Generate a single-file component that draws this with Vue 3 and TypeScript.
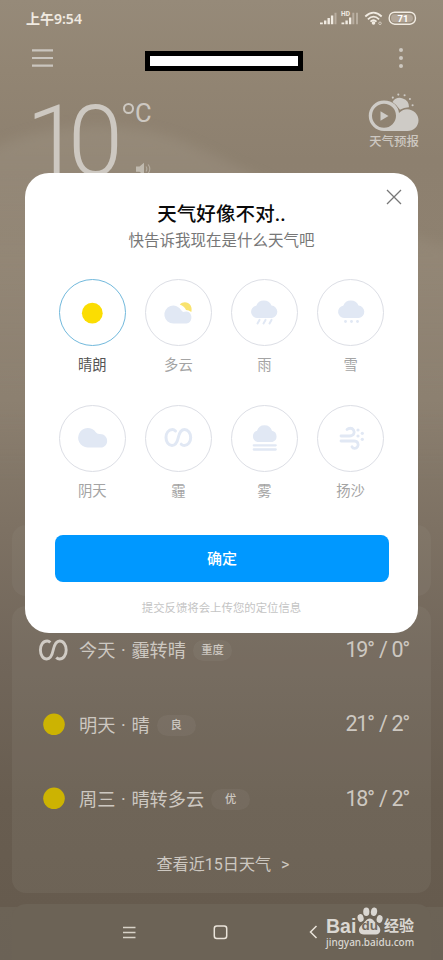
<script setup lang="ts">
import { ref } from 'vue'

type Kind = 'sun' | 'partly' | 'rain' | 'snow' | 'cloud' | 'haze' | 'fog' | 'sand'

interface WeatherOption {
  kind: Kind
  label: string
}

interface ForecastDay {
  day: string
  condition: string
  quality: string
  high: number
  low: number
  haze: boolean
}

const options: WeatherOption[] = [
  { kind: 'sun', label: '晴朗' },
  { kind: 'partly', label: '多云' },
  { kind: 'rain', label: '雨' },
  { kind: 'snow', label: '雪' },
  { kind: 'cloud', label: '阴天' },
  { kind: 'haze', label: '霾' },
  { kind: 'fog', label: '雾' },
  { kind: 'sand', label: '扬沙' },
]

const forecast: ForecastDay[] = [
  { day: '今天', condition: '霾转晴', quality: '重度', high: 19, low: 0, haze: true },
  { day: '明天', condition: '晴', quality: '良', high: 21, low: 2, haze: false },
  { day: '周三', condition: '晴转多云', quality: '优', high: 18, low: 2, haze: false },
]

const selected = ref<Kind>('sun')
</script>

<template>
  <div class="phone">
    <svg class="hills" viewBox="0 0 443 560" aria-hidden="true">
      <defs>
        <filter id="soft" x="-20%" y="-20%" width="140%" height="140%">
          <feGaussianBlur stdDeviation="6" />
        </filter>
        <linearGradient id="fade" x1="0" y1="0" x2="0" y2="1">
          <stop offset="0" stop-color="#9d9282" />
          <stop offset="1" stop-color="#9d9282" stop-opacity="0" />
        </linearGradient>
      </defs>
      <path d="M-20 155C40 120 130 118 185 142C240 165 290 200 460 250V480H-20Z" fill="url(#fade)" opacity=".5" filter="url(#soft)" />
    </svg>

    <header class="status">
      <span class="clock">上午9:54</span>
      <svg class="status-icons" viewBox="0 0 100 20" width="100" height="20">
        <g fill="#f1ebe2">
          <path d="M1 14.500h2.800v1.800H1zM5 12.500h2.400v3.800H5zM8.500 10h2.400v6.300H8.500zM11.900 7.500h2.400v8.800h-2.400z" />
          <path d="M15.500 4.800h2v11.500h-2zM33.300 4.800h2v11.500h-2zM37 4.800h2v11.500h-2z" opacity=".38" />
          <path d="M22.500 14.500h2.800v1.800h-2.800zM26.400 12.500h2.400v3.800h-2.400zM30 9.500h2.300v6.800H30z" />
          <circle cx="54.500" cy="15" r="1.800" />
        </g>
        <g fill="none" stroke="#f1ebe2" stroke-width="1.800">
          <path d="M46.300 8.500Q54.500 .8 62.700 8.500M48.900 11.300Q54.500 6 60.100 11.300M51.500 13.700Q54.500 10.800 57.500 13.700" />
          <circle cx="61" cy="15.300" r="1.300" stroke-width="1" opacity=".6" />
          <rect x="70.200" y="4.200" width="26.200" height="12" rx="5.500" stroke-width="1.400" />
        </g>
        <path d="M75 6.200h14q5 0 5 4t-5 4H75q-3 0-3-4t3-4Z" fill="#d6cdc0" opacity=".45" />
        <text x="22" y="8" class="hd">HD</text>
        <text x="78.500" y="13.600" class="battery">71</text>
      </svg>
    </header>

    <div class="toolbar">
      <svg viewBox="0 0 21 18" width="21" height="18">
        <path d="M0 1.300h21M0 9h21M0 16.700h21" stroke="#cac5be" stroke-width="2.200" />
      </svg>
      <div class="place"></div>
      <svg viewBox="0 0 6 20" width="6" height="20" fill="#cdc8c0">
        <circle cx="3" cy="2" r="2" /><circle cx="3" cy="10" r="2" /><circle cx="3" cy="18" r="2" />
      </svg>
    </div>

    <section class="current">
      <span class="temp">10</span>
      <div class="side">
        <span class="unit"><i class="ring"></i>C</span>
        <svg class="speaker" viewBox="0 0 16 14" width="16" height="14">
          <path d="M0 4.500h3.500L8 .8v12.400L3.500 9.800H0Z" fill="#c0baaf" />
          <path d="M10 4.500q1.700 2.500 0 5M12.200 2.500q3.200 4.500 0 9" fill="none" stroke="#b5ada1" stroke-width="1.100" />
        </svg>
      </div>
      <div class="video">
        <svg viewBox="0 0 52 40" width="52" height="40">
          <g fill="#cecbc6">
            <path d="M24.500 9A9 9 0 0 1 41 14.300A16 16 0 0 0 32 16.800Q29 12 24.500 9Z" />
            <circle cx="24.800" cy="4.600" r="1.050" /><circle cx="30.300" cy="1.600" r="1.050" /><circle cx="36.600" cy="2.200" r="1.050" />
            <circle cx="41.900" cy="6" r="1.050" /><circle cx="44.600" cy="12.200" r="1.050" />
            <path fill-rule="evenodd" d="M16 7.500C25 7.500 30.500 13.500 31 20Q34.500 16.200 39 16.200C45.500 16.200 50.500 21.200 50.500 27.200C50.500 33.500 45.500 38 39.500 38H16A15.200 15.200 0 0 1 16 7.500ZM16 10.800A12 12 0 1 0 16 34.800A12 12 0 1 0 16 10.800Z" />
            <path d="M12.500 18.200L20.500 23L12.500 27.800Z" />
          </g>
        </svg>
        <span>天气预报</span>
      </div>
    </section>

    <section class="card summary"></section>

    <section class="card forecast">
      <div v-for="row in forecast" :key="row.day" class="day">
        <svg class="day-icon" viewBox="0 0 30 24" width="30" height="24">
          <path v-if="row.haze" d="M12.300 4.600C11.300 3.500 10.200 3 9.200 3C5 3 2.400 7 2.400 12C2.400 17 5 21 8.700 21C12.800 21 14.200 17 15.200 12C16.300 7 17.800 3 21.700 3C25.400 3 28.200 7 28.200 12C28.200 17 25.400 21 21.500 21C20.200 21 19.100 20.400 18.300 19.500" fill="none" stroke="#d0cbc4" stroke-width="2.900" />
          <circle v-else cx="16" cy="11.300" r="10.800" fill="#ccb302" />
        </svg>
        <span class="date">{{ row.day }}</span>
        <span class="dot">·</span>
        <span class="cond">{{ row.condition }}</span>
        <span class="badge">{{ row.quality }}</span>
        <span class="range">{{ row.high }}° / {{ row.low }}°</span>
      </div>
      <div class="more"><span>查看近15日天气</span><span class="arrow">&gt;</span></div>
    </section>

    <section class="next">
      <svg class="keys" viewBox="0 0 210 20" width="210" height="20">
        <path d="M4 4.500h12.500M4 9.500h12.500M4 14.500h12.500" stroke="#d8d2c8" stroke-width="1.700" />
        <rect x="95.300" y="3" width="12.400" height="12.400" rx="2.500" fill="none" stroke="#eae4da" stroke-width="1.500" />
        <path d="M197.500 3L191.500 9L197.500 15" fill="none" stroke="#eae4da" stroke-width="1.500" />
      </svg>
    </section>

    <div class="watermark">
      <div class="brand">
        <span class="bai">Bai</span>
        <span class="paw">
          <svg viewBox="0 0 26 28" width="26" height="28">
            <g fill="#dad7d2">
              <ellipse cx="3.600" cy="11" rx="3" ry="4" transform="rotate(-15 3.600 11)" />
              <ellipse cx="9.300" cy="4.700" rx="3.100" ry="4.300" />
              <ellipse cx="17" cy="4.700" rx="3.100" ry="4.300" transform="rotate(10 17 4.700)" />
              <ellipse cx="22.600" cy="12" rx="2.900" ry="4" transform="rotate(15 22.600 12)" />
              <path d="M12.800 11.500C16.500 11.500 17.500 15.500 21 18.500C25 22 23.500 27.500 19 27.500H7C2 27.500 0 22.500 4.300 18.500C7.800 15.500 9.200 11.500 12.800 11.500Z" />
            </g>
          </svg>
          <span class="du">du</span>
        </span>
        <span class="exp">经验</span>
      </div>
      <div class="site">jingyan.baidu.com</div>
    </div>

    <div class="dialog">
      <button class="close" aria-label="关闭">
        <svg viewBox="0 0 16 16" width="16" height="16">
          <path d="M1 1L15 15M15 1L1 15" stroke="#777" stroke-width="1.300" />
        </svg>
      </button>
      <h1>天气好像不对..</h1>
      <p class="sub">快告诉我现在是什么天气吧</p>

      <div class="grid">
        <div
          v-for="o in options"
          :key="o.kind"
          class="option"
          :class="{ active: o.kind === selected }"
          @click="selected = o.kind"
        >
          <div class="circle">
            <svg viewBox="0 0 40 40" width="40" height="40" fill="#e1e8f4">
              <circle v-if="o.kind === 'sun'" cx="20.300" cy="20.200" r="10.400" fill="#fbdd02" />
              <g v-else-if="o.kind === 'partly'">
                <path d="M21.800 11.500C24 9 27.500 8.500 30 10C33 11.700 34.300 15 33.300 19Q31 17 28 17Q26.500 13 21.800 11.500Z" fill="#f9e36e" />
                <path d="M15.500 30.500A9 9 0 1 1 23.300 17.300Q24.500 19.300 26.500 18.800Q29 18 31 19.300C35 22 34 30.500 28.500 30.500Z" />
              </g>
              <g v-else-if="o.kind === 'rain'">
                <path d="M13 25A6.200 6.200 0 0 1 12.200 12.700A8.300 8.300 0 0 1 27.500 12.500A6.300 6.300 0 0 1 28 25Z" />
                <path d="M15.500 26.900L13.500 30.400M21.500 26.900L19.500 30.400M27.500 26.900L25.500 30.400" stroke="#e1e8f4" stroke-width="2" stroke-linecap="round" />
              </g>
              <g v-else-if="o.kind === 'snow'">
                <path d="M13 25A6.200 6.200 0 0 1 12.200 12.700A8.300 8.300 0 0 1 27.500 12.500A6.300 6.300 0 0 1 28 25Z" />
                <circle cx="14.500" cy="28.500" r="1.400" /><circle cx="20.500" cy="28.500" r="1.400" /><circle cx="26.500" cy="28.500" r="1.400" />
              </g>
              <path v-else-if="o.kind === 'cloud'" d="M15.500 29.500A9.700 9.700 0 1 1 23.800 14.300Q25 16.200 27.500 16.100C37.500 15.800 37.500 29.500 28.500 29.500Z" />
              <path v-else-if="o.kind === 'haze'" d="M17.500 13C16.500 12 15.500 11.500 14.500 11.500C10.500 11.500 8 15 8 19.500C8 24 10.500 27.500 14 27.500C18 27.500 19.300 24 20.300 19.500C21.300 15 22.800 11.500 26.500 11.500C30 11.500 32.700 15 32.700 19.500C32.700 24 30 27.500 26.300 27.500C25 27.500 24 27 23.200 26.200" fill="none" stroke="#e1e8f4" stroke-width="3" stroke-linecap="round" />
              <g v-else-if="o.kind === 'fog'">
                <path d="M13.500 24A5.800 5.800 0 0 1 13 12.800A7.800 7.800 0 0 1 28 12.800A5.800 5.800 0 0 1 28.500 24Z" />
                <path d="M9.800 27.300H31.700M9.800 31.500H31.700" stroke="#e1e8f4" stroke-width="2.300" stroke-linecap="round" />
              </g>
              <g v-else>
                <path d="M10 18H18.500C23 18 24 14.500 22.500 12C21 9.500 17.500 10 16 11.500M10 23H23C27 23 28 26.500 26.500 28.800C25 31 22 30.800 21 28.800" fill="none" stroke="#e1e8f4" stroke-width="2.800" stroke-linecap="round" />
                <circle cx="27" cy="12" r="1.600" /><circle cx="31.300" cy="15.300" r="1.600" /><circle cx="27" cy="18" r="1.600" /><circle cx="31.300" cy="21.300" r="1.600" />
              </g>
            </svg>
          </div>
          <span class="label">{{ o.label }}</span>
        </div>
      </div>

      <button class="confirm">确定</button>
      <p class="note">提交反馈将会上传您的定位信息</p>
    </div>
  </div>
</template>

<style>
body {
  margin: 0;
}
</style>

<style scoped>
.phone {
  position: relative;
  box-sizing: border-box;
  width: 443px;
  height: 960px;
  overflow: hidden;
  display: flex;
  flex-direction: column;
  font-family: Roboto, 'Noto Sans CJK SC', sans-serif;
  color: #cdc8c1;
  background: linear-gradient(#968a79 0, #928573 70px, #8d806f 160px, #8e8170 260px, #8a7e6e 400px, #7d7163 530px, #71665a 660px, #685d50 800px, #665b4e 907px, #6c6356 907px, #6b6256 960px);
}
.hills {
  position: absolute;
  left: 0;
  top: 0;
  width: 443px;
  height: 560px;
}
.status,
.toolbar,
.current,
.card,
.next {
  position: relative;
  box-sizing: border-box;
  flex: none;
}
.status {
  height: 37px;
  padding: 8px 24px 0 26px;
  display: flex;
  justify-content: space-between;
}
.clock {
  font: 600 14px/21px 'Noto Sans', 'Noto Sans CJK SC', sans-serif;
  color: #f0eae1;
}
.hd {
  font: 700 6.6px Roboto, sans-serif;
  fill: #f1ebe2;
}
.battery {
  font: 700 9.5px Roboto, sans-serif;
  fill: #fff;
}
.toolbar {
  height: 48px;
  padding: 11px 39px 0 32px;
  display: flex;
  align-items: flex-start;
}
.toolbar > svg:first-child {
  margin-top: 1px;
}
.toolbar > svg:last-child {
  margin-left: auto;
}
.place {
  box-sizing: border-box;
  width: 158px;
  height: 20px;
  margin: 3px 0 0 92px;
  border: 5px solid #000;
  background: #fff;
}
.current {
  height: 440px;
  padding: 0 23px 0 26px;
  display: flex;
  align-items: flex-start;
}
.temp {
  width: 96px;
  margin-top: 4px;
  font-size: 99px;
  line-height: 104px;
  font-weight: 300;
  letter-spacing: -13px;
  white-space: nowrap;
}
.side {
  margin-top: 11px;
  display: flex;
  flex-direction: column;
}
.unit {
  display: flex;
  font-size: 25.5px;
  line-height: 34px;
  font-weight: 400;
}
.ring {
  box-sizing: border-box;
  width: 11px;
  height: 11px;
  margin: 7px 1px 0 1px;
  border: 2px solid #cdc8c1;
  border-radius: 50%;
}
.speaker {
  margin: 32px 0 0 14px;
}
.video {
  margin: 8px 0 0 auto;
  display: flex;
  flex-direction: column;
  align-items: center;
  font-size: 12.4px;
  line-height: 18px;
  font-weight: 500;
}
.card {
  margin: 0 12px;
  border-radius: 14px;
  background: rgba(150, 145, 132, 0.17);
}
.summary {
  height: 71px;
}
.forecast {
  margin-top: 10px;
  height: 287px;
  padding: 7px 23px 0 26px;
}
.day {
  height: 74.5px;
  display: flex;
  align-items: center;
  font-size: 18.2px;
  line-height: 28px;
}
.day-icon {
  margin-right: 11px;
}
.date,
.dot,
.cond {
  margin-top: 1.5px;
}
.dot {
  width: 16px;
  text-align: center;
}
.badge {
  box-sizing: border-box;
  min-width: 39px;
  height: 21px;
  margin: 1px 0 0 7px;
  padding: 0 8px;
  border-radius: 11px;
  background: rgba(255, 255, 255, 0.045);
  font-size: 11.3px;
  line-height: 21px;
  font-weight: 500;
  text-align: center;
}
.range {
  margin: -1px -1px 0 auto;
  font-size: 21.5px;
  font-weight: 400;
  letter-spacing: -1.3px;
  word-spacing: 1px;
}
.more {
  display: flex;
  justify-content: center;
  gap: 10px;
  margin-top: 16px;
  font-size: 16.1px;
  line-height: 24px;
}
.next {
  margin: 11px 12px 0;
  height: 57px;
  border-radius: 14px 14px 0 0;
  background: #6c6356;
}
.keys {
  display: block;
  margin: 19px 0 0 107px;
}
.watermark {
  position: absolute;
  left: 326px;
  top: 906px;
  color: #dad7d2;
}
.brand {
  display: flex;
  height: 30px;
  align-items: flex-end;
}
.bai {
  width: 31px;
  font: 700 19.5px/19px 'Liberation Sans', sans-serif;
}
.paw {
  position: relative;
  width: 26px;
  height: 29px;
}
.du {
  position: absolute;
  left: 4.5px;
  top: 11px;
  font: 700 13.5px/16px 'Liberation Sans', sans-serif;
  color: #71695f;
}
.exp {
  margin-left: 1px;
  font-size: 15px;
  line-height: 19px;
  font-weight: 700;
}
.site {
  font: 500 10px/13px 'Noto Sans', sans-serif;
}
.dialog {
  position: absolute;
  left: 25px;
  top: 173px;
  box-sizing: border-box;
  width: 393px;
  height: 460px;
  padding: 28px 30px 0;
  border-radius: 24px;
  background: #fff;
  display: flex;
  flex-direction: column;
}
button {
  border: 0;
  padding: 0;
  font-family: inherit;
}
.close {
  position: absolute;
  right: 16px;
  top: 16px;
  width: 16px;
  height: 16px;
  background: none;
}
.close svg {
  display: block;
}
h1 {
  margin: 0;
  font-size: 19.5px;
  line-height: 28px;
  font-weight: 500;
  letter-spacing: 0.1px;
  text-align: center;
  color: #0a0a0a;
}
.sub {
  margin: 1px 0 0;
  font-size: 15.5px;
  line-height: 23px;
  text-align: center;
  color: #777;
}
.grid {
  display: grid;
  grid-template-columns: repeat(4, 67px);
  column-gap: 19.1px;
  margin: 26px 0 0 3.8px;
  grid-auto-rows: 125.5px;
}
.option {
  display: flex;
  flex-direction: column;
  align-items: center;
  color: #a4a4a4;
}
.circle {
  box-sizing: border-box;
  width: 67px;
  height: 67px;
  border: 1px solid #dcdee5;
  border-radius: 50%;
  display: flex;
  align-items: center;
  justify-content: center;
}
.active {
  color: #555;
}
.active .circle {
  border-color: #72b9dc;
}
.label {
  margin-top: 8px;
  font-size: 14.3px;
  line-height: 22px;
}
.confirm {
  flex: none;
  width: 334px;
  height: 47px;
  margin-top: 5px;
  border-radius: 8px;
  background: #0098ff;
  color: #fff;
  font-size: 15px;
  line-height: 48px;
  font-weight: 500;
}
.note {
  margin: 17px 0 0;
  font-size: 11.4px;
  line-height: 18px;
  text-align: center;
  color: #c4c4c4;
}
</style>
